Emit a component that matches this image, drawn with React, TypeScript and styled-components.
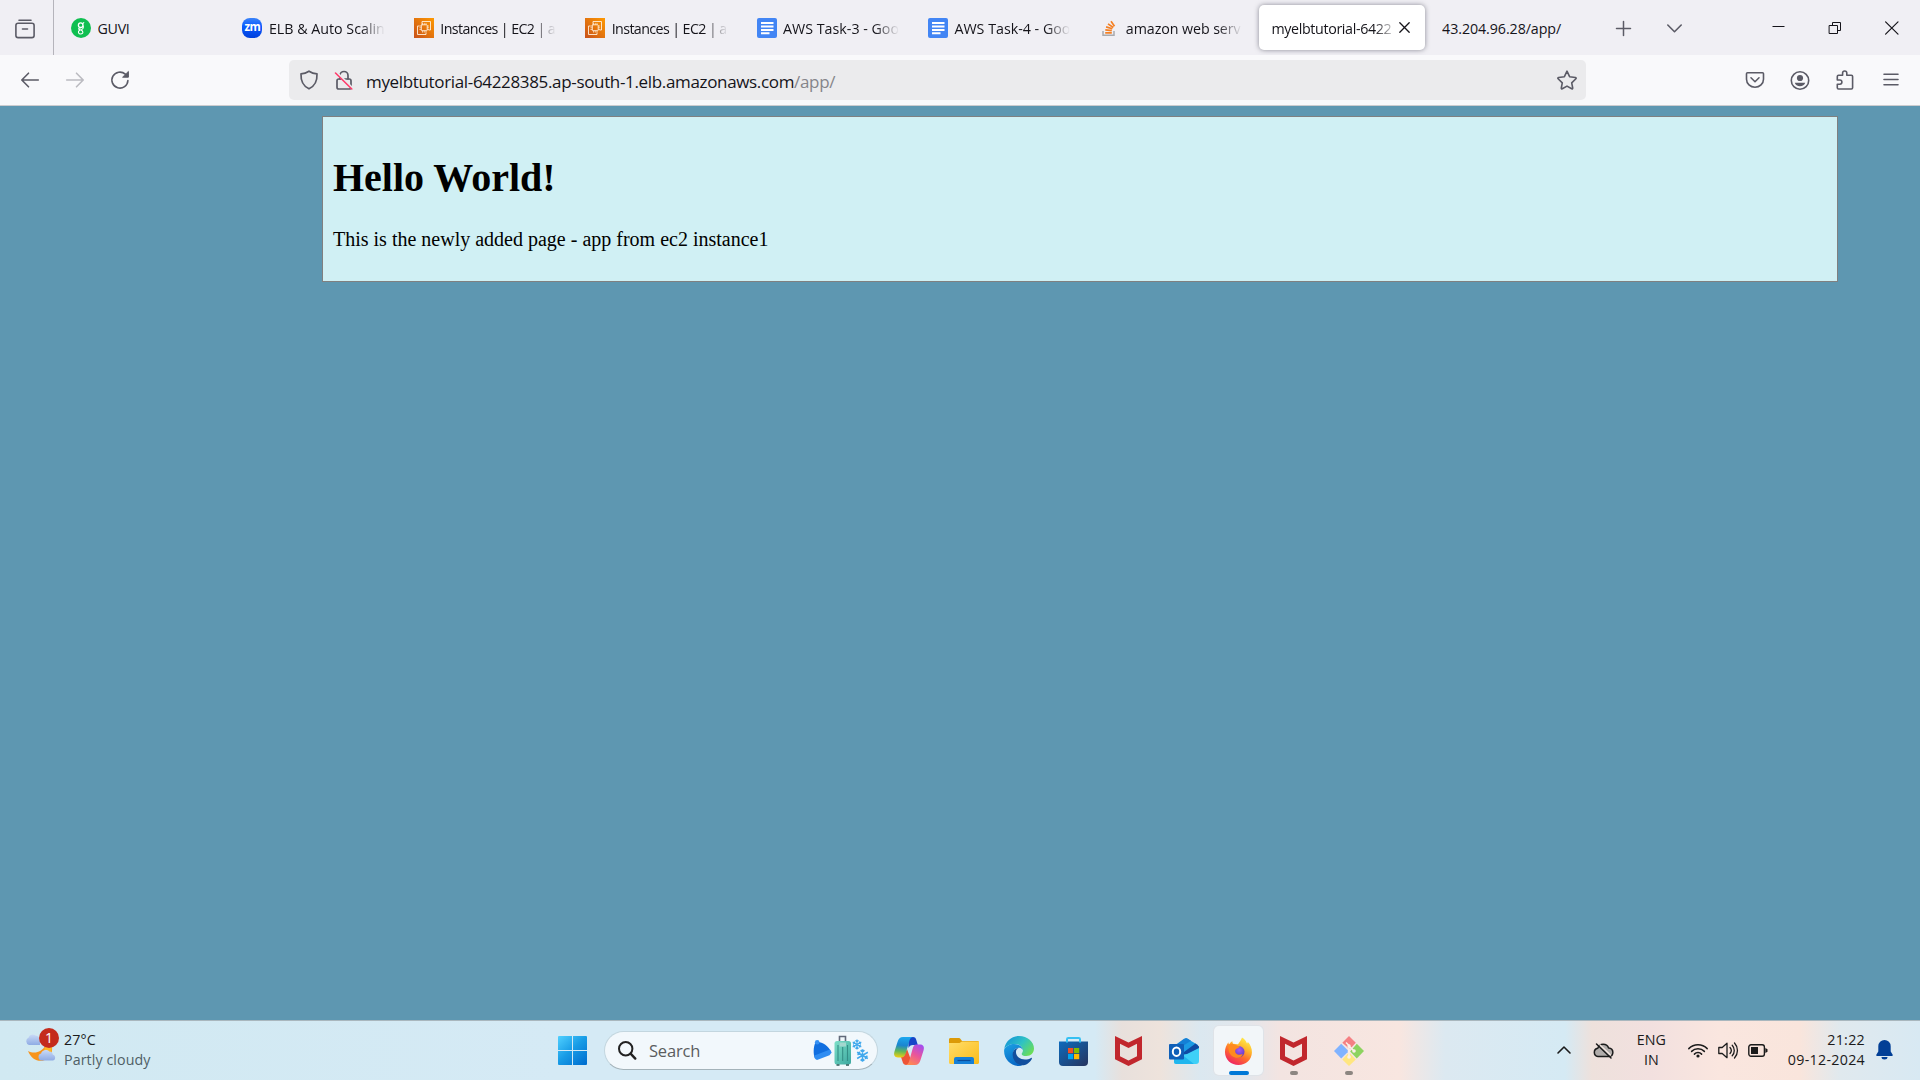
import React from 'react';
import styled, { createGlobalStyle, css } from 'styled-components';

const GlobalStyle = createGlobalStyle`
  * { box-sizing: border-box; }
  html, body { margin: 0; padding: 0; }
  body { width: 1920px; height: 1080px; overflow: hidden; }
  svg { display: block; flex: none; overflow: visible; }
`;

const ui = css`
  font-family: 'Open Sans', 'Noto Sans', sans-serif;
`;

const Screen = styled.div`
  display: flex;
  flex-direction: column;
  width: 1920px;
  height: 1080px;
  overflow: hidden;
`;

/* ---------- Tab strip ---------- */

const TabStrip = styled.header`
  ${ui}
  display: flex;
  height: 55px;
  flex: none;
  background: #f0eff4;
  color: #15141a;
`;

const FirefoxView = styled.div`
  display: flex;
  align-items: center;
  width: 54px;
  padding: 3px 0 0 15px;
  border-right: 1px solid #b5b4bb;
`;

const TabList = styled.div`
  display: flex;
  align-items: center;
  padding: 0 0 0 3px;
`;

const Tab = styled.div<{ $active?: boolean }>`
  display: flex;
  align-items: center;
  gap: ${p => (p.$active ? 7 : 6.5)}px;
  width: ${p => (p.$active ? 166 : 171.4)}px;
  height: 45px;
  padding: 0 ${p => (p.$active ? '15px 0 12px' : '15px 0 14px')};
  margin: ${p => (p.$active ? '0 2.7px' : '0')};
  border-radius: 5px;
  ${p => p.$active && css`
    background: #fff;
    box-shadow: 0 0 5px rgba(70, 70, 85, 0.6);
  `}
`;

const TabLabel = styled.span<{ $tracking?: number; $fade?: boolean }>`
  flex: 1;
  min-width: 0;
  overflow: hidden;
  white-space: nowrap;
  font-size: 14.25px;
  line-height: 24px;
  padding-top: 2px;
  letter-spacing: ${p => p.$tracking ?? 0}px;
  ${p => p.$fade && css`
    mask-image: linear-gradient(to left, transparent, #000 24px);
  `}
`;

const CloseSlot = styled.span`
  display: flex;
  margin-left: -6px;
`;

const StripActions = styled.div`
  display: flex;
  align-items: center;
  gap: 36px;
  padding: 2px 0 0 16px;
`;

const WindowControls = styled.div`
  display: flex;
  align-items: center;
  gap: 43px;
  margin-left: auto;
  padding-right: 21px;
`;

/* ---------- Navigation bar ---------- */

const NavBar = styled.nav`
  ${ui}
  display: flex;
  align-items: center;
  height: 51px;
  flex: none;
  background: #f9f9fb;
  border-bottom: 1px solid #cccccf;
`;

const NavButtons = styled.div`
  display: flex;
  align-items: center;
  gap: 25px;
  width: 289px;
  padding-left: 20px;
`;

const UrlBar = styled.div`
  display: flex;
  align-items: center;
  width: 1297px;
  height: 40px;
  padding: 0 9px 0 10px;
  border-radius: 5px;
  background: #ebebed;
`;

const UrlIcons = styled.div`
  display: flex;
  gap: 15px;
  margin-right: 12px;
`;

const Url = styled.span`
  flex: 1;
  padding-top: 3px;
  font-size: 17px;
  line-height: 26px;
  letter-spacing: -0.34px;
  color: #15141a;
  white-space: nowrap;
`;

const UrlPath = styled.span`
  color: #85858a;
`;

const NavTools = styled.div`
  display: flex;
  align-items: center;
  gap: 25.3px;
  margin-left: auto;
  padding-right: 19.5px;
`;

/* ---------- Web page ---------- */

const Page = styled.main`
  flex: 1;
  padding: 10px 82px 0 322px;
  background: #5e97b1;
  color: #000;
  font-family: 'Liberation Serif', 'Times New Roman', serif;
`;

const Card = styled.section`
  height: 166px;
  padding: 10px;
  border: 1px solid #808080;
  background: #d0f0f4;
`;

const Heading = styled.h1`
  margin: 28px 0 27px;
  font-size: 40px;
  line-height: 46px;
  font-weight: bold;
`;

const Paragraph = styled.p`
  margin: 0;
  font-size: 20px;
  line-height: 23px;
`;

/* ---------- Taskbar ---------- */

const Taskbar = styled.footer`
  ${ui}
  display: flex;
  height: 60px;
  flex: none;
  border-top: 1px solid #a9b7be;
  color: #1b1b1b;
  background: linear-gradient(
    90deg,
    #d1e9f2 0, #d5eaf5 560px, #d5eaf5 1095px, #e8e0dc 1122px, #eee3dc 1160px,
    #dbe8f0 1200px, #e4e6eb 1250px, #f3e4e1 1280px, #f8e6e0 1400px,
    #dce9f1 1445px, #d5eaf4 1565px, #eee1dc 1592px, #f2e0df 1650px,
    #fae6df 1720px, #f9e5dc 1800px, #e0e9ee 1840px, #d8e9f3 1920px
  );
`;

const Weather = styled.div`
  display: flex;
  width: 558px;
  padding: 7px 0 0 25px;
  gap: 8px;
`;

const WeatherIcon = styled.div`
  position: relative;
  width: 31px;
  height: 38px;
`;

const Badge = styled.span`
  position: absolute;
  left: 14px;
  top: 0;
  width: 20px;
  height: 20px;
  border-radius: 50%;
  background: #c42b1c;
  color: #fff;
  font-size: 14px;
  line-height: 20px;
  text-align: center;
`;

const TwoLines = styled.div<{ $align?: string; $tracking?: number }>`
  font-size: 14.25px;
  line-height: 20px;
  text-align: ${p => p.$align ?? 'left'};
  letter-spacing: ${p => p.$tracking ?? 0}px;
  white-space: nowrap;
`;

const WeatherText = styled(TwoLines)`
  padding-top: 2px;
`;

const Muted = styled.div`
  color: #4f5f66;
`;

const Launcher = styled.div`
  display: flex;
  align-items: center;
`;

const SearchPill = styled.div`
  display: flex;
  align-items: center;
  width: 274px;
  height: 39px;
  margin: 0 3px 0 17px;
  padding: 0 8px 0 13px;
  border: 1px solid #c3d6df;
  border-bottom-color: #a4b3ba;
  border-radius: 20px;
  background: #f2f8fc;
`;

const SearchLabel = styled.span`
  flex: 1;
  padding-left: 13px;
  font-size: 16.5px;
  letter-spacing: -0.2px;
  line-height: 24px;
  color: #5b5d5f;
`;

const AppSlot = styled.div<{ $active?: boolean }>`
  display: flex;
  position: relative;
  align-items: center;
  justify-content: center;
  width: 49px;
  height: 49px;
  margin: 0 3px;
  border-radius: 5px;
  ${p => p.$active && css`
    background: #f2f6f9;
    box-shadow: 0 0 0 1px #dfe3e8;
  `}
`;

const RunMark = styled.i<{ $wide?: boolean }>`
  position: absolute;
  bottom: 0;
  left: 50%;
  width: ${p => (p.$wide ? 20 : 8)}px;
  height: 4px;
  border-radius: 2px;
  transform: translateX(-50%);
  background: ${p => (p.$wide ? '#0078d7' : '#8c8681')};
`;

const Tray = styled.div`
  display: flex;
  align-items: center;
  margin-left: auto;
  padding: 0 27px 1px 0;
`;

const TraySlot = styled.div<{ $gap: number }>`
  display: flex;
  margin-left: ${p => p.$gap}px;
`;

const TrayText = styled(TraySlot)`
  padding-bottom: 1px;
`;

/* ---------- Icons ---------- */

type IconProps = { w: number; h: number; box?: string; stroke?: string; sw?: number; children: React.ReactNode };

const Icon = ({ w, h, box, stroke = '#5b5b66', sw = 1.6, children }: IconProps) => (
  <svg width={w} height={h} viewBox={box ?? `0 0 ${w} ${h}`} fill="none" stroke={stroke} strokeWidth={sw} strokeLinecap="round" strokeLinejoin="round">
    {children}
  </svg>
);

const GuviIcon = () => (
  <Icon w={20} h={20} stroke="#fff" sw={1.3}>
    <circle cx="10" cy="10" r="10" fill="#0fbf50" stroke="none" />
    <circle cx="9.7" cy="7.2" r="2.300" />
    <path d="M12 5.300l.8-.7M9.800 9.800c-3 .3-2.700 1.600-.6 2 3.500.6 3.400 4.200.6 4.200-2.600 0-3.200-2.600-1.200-3.800M12.200 8c.5 2-.4 3.300-2.200 4" strokeWidth="1.100" />
  </Icon>
);

const ZoomBadge = styled.span`
  display: flex;
  justify-content: center;
  flex: none;
  width: 20px;
  height: 20px;
  border-radius: 8px;
  background: linear-gradient(#3b83f8, #0b5cff 40%, #0040dc);
  color: #fff;
  font: bold 11.5px/17px 'Open Sans', sans-serif;
  letter-spacing: -0.5px;
`;

const Ec2Icon = ({ id }: { id: string }) => (
  <Icon w={20} h={20} stroke="#ffeeda" sw={0.9}>
    <defs>
      <linearGradient id={id} x1="0" y1="1" x2="1" y2="0">
        <stop offset="0" stopColor="#c8511b" />
        <stop offset="1" stopColor="#ff9900" />
      </linearGradient>
    </defs>
    <path d="M0 0h20v20H0z" fill={`url(#${id})`} stroke="none" />
    <path d="M8 5.500V3.500h8.500V12H15M12 15v1.500H3.500V8H5" />
    <rect x="7.300" y="6.800" width="5.900" height="5.900" rx=".6" />
    <path d="M8.500 6.500V5.300M10.250 6.500V5.300M12 6.500V5.300M8.500 14.200V13M10.250 14.200V13M12 14.200V13M7 8H5.800M7 9.750H5.800M7 11.500H5.800M14.700 8h-1.200M14.700 9.750h-1.200M14.700 11.500h-1.200" strokeWidth=".7" />
  </Icon>
);

const DocsIcon = () => (
  <Icon w={20} h={20} stroke="#fff" sw={2}>
    <rect width="20" height="20" rx="2" fill="#4285f4" stroke="none" />
    <path d="M4 5h12.500M4 8.500h12.500M4 12h12.500M4 15.300h8.500" strokeLinecap="butt" />
  </Icon>
);

const StackIcon = () => (
  <Icon w={20} h={20} stroke="#f48024" sw={1.700}>
    <path d="M4 13v4.200h11V13" stroke="#a9aaad" strokeLinecap="butt" strokeLinejoin="miter" strokeWidth="1.500" />
    <path d="M6.200 14.800h6.600M6.300 11.900l6.500.8M7.100 8.900l6.200 1.900M9 5.900l5.300 3.600M12 3.300l3.500 4.900" strokeLinecap="butt" />
  </Icon>
);

const ShieldIcon = () => (
  <Icon w={20} h={20} sw={1.7}>
    <path d="M10 1.200c2.400 1.600 5 2.500 8 2.700.3 6.500-1.600 12-8 14.900C3.600 15.900 1.700 10.400 2 3.900c3-.2 5.600-1.100 8-2.700z" />
  </Icon>
);

const LockIcon = () => (
  <Icon w={20} h={20} sw={1.700}>
    <rect x="3" y="9" width="14" height="10" rx="1.800" />
    <path d="M6 9V5.500a4 4 0 0 1 8 0V9" />
    <path d="M2.500 2.300l16 16" stroke="#ebebed" strokeWidth="2.500" />
    <path d="M1.500 3l16.300 16" stroke="#ff3b6b" strokeWidth="1.600" />
  </Icon>
);

const FirefoxIcon = () => (
  <svg width="29" height="30" viewBox="0 0 30 30">
    <defs>
      <linearGradient id="ffBody" x1=".8" y1="0" x2=".25" y2="1">
        <stop offset="0" stopColor="#fff44f" />
        <stop offset=".35" stopColor="#ffb62c" />
        <stop offset=".62" stopColor="#ff6b2d" />
        <stop offset="1" stopColor="#ed1d68" />
      </linearGradient>
      <radialGradient id="ffGlobe" cx=".55" cy=".35" r=".7">
        <stop offset="0" stopColor="#a85af5" />
        <stop offset="1" stopColor="#5036b8" />
      </radialGradient>
    </defs>
    <path d="M18.600 1c3 1.600 4.200 3.800 5.200 6.300.7-.2.800-1 .7-1.800 2.900 3 4.500 7 4.400 11C28.700 24 22.500 29.500 15 29.500S1 24 1 16c0-3.800 1.500-7 3.500-10 .1 1 .3 1.700.8 2.300.8-1.400 2-2.600 3.400-3.300-.1 1 .1 1.900.7 2.600 1.900.2 3.300.5 5.200.4C15.600 5.800 17.800 4 18.600 1z" fill="url(#ffBody)" />
    <circle cx="15.200" cy="15.800" r="6" fill="url(#ffGlobe)" />
    <path d="M5 8.300c2.600-1.200 5.900-.7 8.400 1 .9.600 1.900.8 3.100.7-.6 1.800-2.900 2-4.100 3.100-1.700 1.400-.7 4.700 2 5.500 2.200.6 3.700-.6 5.100-.3-1.200 3.200-4.800 4.400-8 3.500C6 20.300 3.500 14.500 5 8.300z" fill="#ff8a1e" />
  </svg>
);

const McAfeeIcon = () => (
  <svg width="27" height="30" viewBox="0 0 27 30">
    <path d="M0 0l13.500 6.500L27 0v23.300L13.500 30 0 23.300zM5 7.800v12.500l8.500 4.300 8.500-4.300V7.800l-8.500 4.200z" fill="#c1272d" fillRule="evenodd" />
  </svg>
);

const WindowsIcon = () => (
  <svg width="29" height="29" viewBox="0 0 29 29">
    <defs>
      <linearGradient id="win" gradientUnits="userSpaceOnUse" x1="0" y1="0" x2="26" y2="29">
        <stop offset="0" stopColor="#50d0ff" />
        <stop offset=".5" stopColor="#189ce6" />
        <stop offset="1" stopColor="#006fd0" />
      </linearGradient>
    </defs>
    <path d="M1 0h13v14H0V1a1 1 0 0 1 1-1zM15 0h13a1 1 0 0 1 1 1v13H15zM0 15h14v14H1a1 1 0 0 1-1-1zM15 15h14v13a1 1 0 0 1-1 1H15z" fill="url(#win)" />
  </svg>
);

const SearchArt = () => (
  <svg width="56" height="31" viewBox="0 0 56 31">
    <defs>
      <linearGradient id="case" x1="0" y1="0" x2="1" y2="1">
        <stop offset="0" stopColor="#7de0c8" />
        <stop offset="1" stopColor="#3ba79f" />
      </linearGradient>
    </defs>
    <path d="M2 8.500C3 6 8 6.500 12 9.500c3 2.200 5 4.500 5.800 7L16 19.500 2 23.500C0 19 .5 12 2 8.500z" fill="#116fe0" />
    <path d="M1.500 20.500L17 14.500l1.700 3-2.200 2.800L4 25c-2.200-.8-2.800-3-2.500-4.500z" fill="#2f8df2" />
    <circle cx="4.200" cy="7.300" r="2.300" fill="#3590f3" />
    <path d="M26.500 7V1.500h6V7" fill="none" stroke="#626a7a" strokeWidth="1.600" />
    <rect x="21.500" y="6" width="16.500" height="23.500" rx="2.500" fill="url(#case)" />
    <path d="M25 10v16M29.700 12v14M34.500 10v16" stroke="#348e86" strokeWidth="1.100" />
    <path d="M26.500 7.500h6.500v4h-6.500z" fill="#a3d7cf" />
    <path d="M23.500 29.300h3v1.500h-3zM33 29.300h3v1.500h-3z" fill="#2c5957" />
    <g stroke="#42a9ed" strokeWidth="1.200" fill="none">
      <path d="M44 4.500v10M39.700 7l8.600 5M48.300 7l-8.600 5M42.500 5.300L44 6.800l1.500-1.500M42.500 13.700l1.500-1.500 1.500 1.500M40 9l1.700-.8-.2-1.700M48 10l-1.700.8.2 1.700M46.500 6.500l-.2 1.700 1.700.8M41.500 12.500l.2-1.700L40 10" />
      <path transform="translate(-5.500 8.500) scale(1.250)" d="M44 4.500v10M39.700 7l8.600 5M48.300 7l-8.600 5M42.500 5.300L44 6.800l1.500-1.500M42.500 13.700l1.500-1.500 1.500 1.500M40 9l1.700-.8-.2-1.700M48 10l-1.700.8.2 1.700" />
    </g>
  </svg>
);

const CopilotIcon = () => (
  <svg width="30" height="28" viewBox="0 0 30 28">
    <defs>
      <linearGradient id="cpA" x1=".4" y1="0" x2=".3" y2="1">
        <stop offset="0" stopColor="#1ca7ee" />
        <stop offset=".4" stopColor="#1a85d0" />
        <stop offset=".7" stopColor="#63b857" />
        <stop offset="1" stopColor="#f2cf10" />
      </linearGradient>
      <linearGradient id="cpB" x1=".8" y1="0" x2=".3" y2="1">
        <stop offset="0" stopColor="#a34df0" />
        <stop offset=".5" stopColor="#e9559b" />
        <stop offset="1" stopColor="#ff8a52" />
      </linearGradient>
    </defs>
    <path d="M14 0h5c2 0 2.800 1.200 3.300 3L23.800 8H19c-2.500 0-3.500 1-4.500 3z" fill="#1745c8" />
    <path d="M7 20c2.500 0 3.500-1.500 4.300-4L13 12l4 11-1.500 2.500c-.6 1.200-1.500 2.500-3 2.500-2.500 0-3.500-1.500-4-3.500z" fill="#ee5536" />
    <path d="M9 0h10c-2.200.5-3 1.800-3.700 4l-3.300 11.500C11 19 9.500 20.500 7 20.500H4c-3.500 0-4.500-2.500-3.600-5.700L3.500 5C4.600 1.500 6 0 9 0z" fill="url(#cpA)" />
    <path d="M22.500 7.500H26c3.500 0 4.500 2.500 3.600 5.700L26.500 23c-1.100 3.500-2.500 5-5.500 5H11.500c2.200-.5 3-1.800 3.700-4l3.200-11.500c1-3.500 1.600-5 4.100-5z" fill="url(#cpB)" />
  </svg>
);

const FolderIcon = () => (
  <svg width="30" height="26" viewBox="0 0 30 26">
    <defs>
      <linearGradient id="fold" x1="0" y1="0" x2="1" y2="1">
        <stop offset="0" stopColor="#ffdd6b" />
        <stop offset="1" stopColor="#fbbc18" />
      </linearGradient>
    </defs>
    <path d="M0 1.500C0 .6.600 0 1.500 0h8c1 0 1.500.3 2 1L13 3h15.500c1 0 1.500.6 1.500 1.500V9H0z" fill="#dc9a08" />
    <path d="M0 5h10.500L13 3.600h17V24.500c0 .9-.6 1.500-1.500 1.500h-27C.6 26 0 25.400 0 24.500z" fill="url(#fold)" />
    <path d="M5 26v-5a2 2 0 0 1 2-2h16a2 2 0 0 1 2 2v5z" fill="#1580d8" />
    <path d="M8.500 22.500h13" stroke="#0a4c9a" strokeWidth="1.200" />
  </svg>
);

const EdgeIcon = () => (
  <svg width="30" height="30" viewBox="0 0 30 30">
    <defs>
      <linearGradient id="edA" x1="0" y1=".2" x2="1" y2=".8">
        <stop offset="0" stopColor="#1494d8" />
        <stop offset=".5" stopColor="#2fc2c4" />
        <stop offset="1" stopColor="#70e04e" />
      </linearGradient>
      <linearGradient id="edB" x1=".2" y1="0" x2=".6" y2="1">
        <stop offset="0" stopColor="#1b9de2" />
        <stop offset="1" stopColor="#0766c4" />
      </linearGradient>
    </defs>
    <path d="M.3 13C1.300 5.500 7.500 0 15 0c8.500 0 15 6 15 12.500 0 4.500-3.300 7.500-7.500 7.500-3.500 0-5-1.300-4.800-2.300.3-.8 1.200-1.500 1.200-3.200 0-3.500-3.800-6.500-8.500-6.500C5.500 8 2 10 .3 13z" fill="url(#edA)" />
    <path d="M.2 13.500C2 10 6 8 10 8c5.500 0 8.800 3.300 8.900 6-1-1.700-2.500-2.200-4-2.200-4.500 0-6.400 4.200-5.400 8.200 1.100 4.500 5 8 9.500 8.500-1.300 1-2.700 1.500-4 1.500C6 30-.8 22 .2 13.500z" fill="url(#edB)" />
    <path d="M14.500 11.900c-1.700 1-2.700 2.500-2.500 4.600.3 4 4 7 9 7 2.500 0 4.300-.7 6-1.600.7-.3 1.200.3.800 1C25.500 26.800 22 29.300 18 29.300 12.500 29 9 24 8.700 19.500c-.3-4 1.800-7.500 5.800-7.600z" fill="#124f9e" />
  </svg>
);

const StoreIcon = () => (
  <svg width="29" height="30" viewBox="0 0 29 30">
    <defs>
      <linearGradient id="store" x1="0" y1="0" x2="1" y2="1">
        <stop offset="0" stopColor="#0d6bbd" />
        <stop offset="1" stopColor="#26345e" />
      </linearGradient>
    </defs>
    <path d="M0 5.500h29V26a4 4 0 0 1-4 4H4a4 4 0 0 1-4-4z" fill="url(#store)" />
    <path d="M8 6.500V3.300C8 2.500 8.500 2 9.300 2h10.400c.8 0 1.300.5 1.300 1.300v3.200" fill="none" stroke="#35c0f2" strokeWidth="2" />
    <path d="M9 12h5.200v5.200H9z" fill="#f25022" />
    <path d="M15 12h5.200v5.200H15z" fill="#7fba00" />
    <path d="M9 18h5.200v5.200H9z" fill="#00a4ef" />
    <path d="M15 18h5.200v5.200H15z" fill="#ffb900" />
  </svg>
);

const OutlookIcon = () => (
  <svg width="30" height="26" viewBox="0 0 30 26">
    <path d="M5 9L17 0l12 7v8L8 20z" fill="#1b9be4" />
    <path d="M5 8L15 .8c1-.8 2.500-.8 3.500-.2L22 2.800 9 11z" fill="#1480d6" />
    <path d="M15 14L26.500 5.500 30 8.500v3L15 21z" fill="#0f4ba3" />
    <path d="M5 18l13-2 12-6v13a3 3 0 0 1-3 3H7.500A2.500 2.500 0 0 1 5 23.500z" fill="#3fd0f7" />
    <path d="M5 20l9-2.500L25 26H7.500A2.500 2.500 0 0 1 5 23.500z" fill="#20b6ee" />
    <rect y="6" width="15" height="15.500" rx="1" fill="#0f5fb8" />
    <ellipse cx="7.500" cy="13.700" rx="3.700" ry="4.200" fill="none" stroke="#fff" strokeWidth="2" />
  </svg>
);

const GitIcon = () => (
  <svg width="30" height="30" viewBox="0 0 30 30">
    <path d="M15 0l6.800 6.800-6 6.500L8.300 6.700z" fill="#f58083" />
    <path d="M7.200 7.800l6.600 6.400-.2 2L7.200 22.600 0 15z" fill="#80b3ff" />
    <path d="M22.800 7.800L30 15l-7.200 7.500-6.600-7z" fill="#8dd35f" />
    <path d="M8.300 23.500l6.700-7 6.800 7L15 30z" fill="#ffe680" />
    <path d="M12 6.500l3 3V21M15.500 10.500l4.500 4.500" stroke="#fbefe9" strokeWidth="1.500" fill="none" />
    <circle cx="15" cy="10" r="1.700" fill="#fbefe9" />
    <circle cx="20" cy="15" r="1.800" fill="#fbefe9" />
    <circle cx="15" cy="21" r="1.800" fill="#fbefe9" />
  </svg>
);

const WeatherArt = () => (
  <svg width="31" height="38" viewBox="0 0 31 38">
    <defs>
      <linearGradient id="cloud" x1="0" y1="0" x2="0" y2="1">
        <stop offset="0" stopColor="#c9daf7" />
        <stop offset="1" stopColor="#8fabe4" />
      </linearGradient>
    </defs>
    <path d="M4 17a4 4 0 0 1-.3-7.500C4.500 6.500 8 5.500 10.500 7.500c3 .3 4.500 2.500 4.500 5V17z" fill="url(#cloud)" />
    <path d="M26 16c2 4 1.500 9.500-2.500 13.500-6 6-16.500 4-20.500-6.500 7 3.500 14 .5 17-5z" fill="#f7941d" />
    <path d="M20 19c3-1 6-1 7 0l-1 7-8 2z" fill="#fdb827" />
    <path d="M16.500 32.500a3.600 3.600 0 0 1-.4-7c.6-3.300 5.500-5 8.200-2 2.500.2 3.400 1.700 3.400 3 3.300.6 3.300 6 0 6z" fill="url(#cloud)" />
  </svg>
);

/* ---------- Screen ---------- */

export default function App() {
  return (
    <Screen>
      <GlobalStyle />

      <TabStrip>
        <FirefoxView>
          <Icon w={20} h={20}>
            <path d="M4 1.200h12" />
            <rect x=".9" y="4.200" width="18.200" height="14.400" rx="2.200" />
            <path d="M7.500 10h5" />
          </Icon>
        </FirefoxView>
        <TabList>
          <Tab><GuviIcon /><TabLabel $tracking={-0.3}>GUVI</TabLabel></Tab>
          <Tab><ZoomBadge>zm</ZoomBadge><TabLabel $fade>ELB &amp; Auto Scalin</TabLabel></Tab>
          <Tab><Ec2Icon id="ec2a" /><TabLabel $fade $tracking={-0.6}>Instances | EC2 | a</TabLabel></Tab>
          <Tab><Ec2Icon id="ec2b" /><TabLabel $fade $tracking={-0.6}>Instances | EC2 | a</TabLabel></Tab>
          <Tab><DocsIcon /><TabLabel $fade>AWS Task-3 - Goo</TabLabel></Tab>
          <Tab><DocsIcon /><TabLabel $fade>AWS Task-4 - Goo</TabLabel></Tab>
          <Tab><StackIcon /><TabLabel $fade $tracking={-0.08}>amazon web serv</TabLabel></Tab>
          <Tab $active>
            <TabLabel $fade $tracking={-0.35}>myelbtutorial-6422</TabLabel>
            <CloseSlot>
              <Icon w={11} h={11} stroke="#15141a" sw={1.3}><path d="M.8.8l9.400 9.400M10.200.8L.8 10.200" /></Icon>
            </CloseSlot>
          </Tab>
          <Tab><TabLabel $tracking={-0.08}>43.204.96.28/app/</TabLabel></Tab>
        </TabList>
        <StripActions>
          <Icon w={15} h={15} sw={1.5}><path d="M7.500.5v14M.5 7.500h14" /></Icon>
          <Icon w={15} h={10} sw={1.600}><path d="M.8 1l6.700 6.700L14.200 1" /></Icon>
        </StripActions>
        <WindowControls>
          <Icon w={12} h={12} stroke="#15141a" sw={1}><path d="M-.5 4.500h12" strokeLinecap="butt" /></Icon>
          <Icon w={14} h={14} stroke="#15141a" sw={1}>
            <path d="M1.500 4.500h8v8h-8zM4.500 4.500v-3h8v8h-3" strokeLinejoin="miter" />
          </Icon>
          <Icon w={14} h={14} stroke="#15141a" sw={1.200}><path d="M.6.800l12.400 12.400M13 .8L.6 13.200" /></Icon>
        </WindowControls>
      </TabStrip>

      <NavBar>
        <NavButtons>
          <Icon w={20} h={20}><path d="M18.300 10H2M8.500 3.200L1.800 10l6.700 6.800" /></Icon>
          <Icon w={20} h={20} stroke="#bbbbc1"><path d="M1.700 10H18M11.500 3.200l6.700 6.800-6.700 6.800" /></Icon>
          <Icon w={20} h={20}>
            <path d="M17.900 10.500a8 8 0 1 1-2.600-6.300" />
            <path d="M18.400 1.800v5.400H13z" fill="#5b5b66" stroke="#5b5b66" strokeWidth="1" />
          </Icon>
        </NavButtons>
        <UrlBar>
          <UrlIcons><ShieldIcon /><LockIcon /></UrlIcons>
          <Url>myelbtutorial-64228385.ap-south-1.elb.amazonaws.com<UrlPath>/app/</UrlPath></Url>
          <Icon w={20} h={20}>
            <path d="M10 1.200l2.600 5.500 5.800.8c.7.100 1 .8.500 1.300l-4.200 4.100 1 5.100c.1.700-.4 1-1 .8L10 16.100l-4.700 2.700c-.6.200-1.100-.1-1-.8l1-5.100-4.200-4.100c-.5-.5-.2-1.200.5-1.300l5.800-.8z" />
          </Icon>
        </UrlBar>
        <NavTools>
          <Icon w={20} h={20}>
            <path d="M2.500 2.700h15c.6 0 1 .4 1 1V9.300a8.500 8 0 0 1-17 0V3.700c0-.6.400-1 1-1zM6 7.800l4 3.900 4-3.900" />
          </Icon>
          <Icon w={20} h={20}>
            <circle cx="10" cy="10.500" r="8.700" />
            <circle cx="10" cy="8" r="3.100" fill="#5b5b66" stroke="none" />
            <path d="M4.800 12.700h10.400c-.6 2.200-2.600 3.600-5.200 3.600s-4.600-1.400-5.200-3.600z" fill="#5b5b66" stroke="none" />
          </Icon>
          <Icon w={20} h={20}>
            <path d="M7.600 5.300V3.100a2 2 0 0 1 4.200 0v2.200h4.600c.7 0 1.200.5 1.200 1.200v11.300c0 .7-.5 1.200-1.200 1.200H3.500c-.7 0-1.200-.5-1.200-1.200v-3.600h2.500a2 2 0 0 0 0-4.200H2.300V6.500c0-.7.500-1.200 1.200-1.200z" />
          </Icon>
          <Icon w={20} h={20}><path d="M3 4.300h14M3 9.500h14M3 14.800h14" /></Icon>
        </NavTools>
      </NavBar>

      <Page>
        <Card>
          <Heading>Hello World!</Heading>
          <Paragraph>This is the newly added page - app from ec2 instance1</Paragraph>
        </Card>
      </Page>

      <Taskbar>
        <Weather>
          <WeatherIcon><WeatherArt /><Badge>1</Badge></WeatherIcon>
          <WeatherText $tracking={0.08}>
            <div>27°C</div>
            <Muted>Partly cloudy</Muted>
          </WeatherText>
        </Weather>
        <Launcher>
          <WindowsIcon />
          <SearchPill>
            <Icon w={18} h={19} stroke="#222" sw={2}>
              <circle cx="7.700" cy="7.700" r="6.700" />
              <path d="M12.600 12.600l4.700 5" strokeWidth="2.400" />
            </Icon>
            <SearchLabel>Search</SearchLabel>
            <SearchArt />
          </SearchPill>
          <AppSlot><CopilotIcon /></AppSlot>
          <AppSlot><FolderIcon /></AppSlot>
          <AppSlot><EdgeIcon /></AppSlot>
          <AppSlot><StoreIcon /></AppSlot>
          <AppSlot><McAfeeIcon /></AppSlot>
          <AppSlot><OutlookIcon /></AppSlot>
          <AppSlot $active><FirefoxIcon /><RunMark $wide /></AppSlot>
          <AppSlot><McAfeeIcon /><RunMark /></AppSlot>
          <AppSlot><GitIcon /><RunMark /></AppSlot>
        </Launcher>
        <Tray>
          <TraySlot $gap={0}>
            <Icon w={14} h={8} stroke="#1b1b1b" sw={1.600}><path d="M1 7l6-6 6 6" /></Icon>
          </TraySlot>
          <TraySlot $gap={22}>
            <Icon w={21} h={17} stroke="#1b1b1b" sw={1.500}>
              <path d="M5 14.500a4.200 4.200 0 0 1-.2-8.300C6.500 1.100 13.500.8 15.600 5.900c5.600.4 5.700 8.400.2 8.600z" fill="#b1adab" />
              <path d="M7 3l10.500 10" stroke="#f3e6e0" strokeWidth="1.500" />
              <path d="M3.500 2l14.500 14" />
            </Icon>
          </TraySlot>
          <TrayText $gap={23}>
            <TwoLines $align="center"><div>ENG</div><div>IN</div></TwoLines>
          </TrayText>
          <TraySlot $gap={22}>
            <Icon w={20} h={15} stroke="#1b1b1b" sw={1.500}>
              <path d="M.8 5.600a13 13 0 0 1 18.400 0M3.600 8.400a9 9 0 0 1 12.800 0M6.400 11.100a5.100 5.100 0 0 1 7.200 0" />
              <circle cx="10" cy="13" r="1.600" fill="#1b1b1b" stroke="none" />
            </Icon>
          </TraySlot>
          <TraySlot $gap={10}>
            <Icon w={20} h={17} stroke="#1b1b1b" sw={1.300}>
              <path d="M.8 5.500h3.400L9 1.300v14.400l-4.800-4.200H.8zM12 5.500a4.500 4.500 0 0 1 0 6M14.200 3.200a7.800 7.800 0 0 1 0 10.600M16.500 1a11 11 0 0 1 0 15" />
            </Icon>
          </TraySlot>
          <TraySlot $gap={10}>
            <Icon w={21} h={13} stroke="#1b1b1b" sw={1.400}>
              <rect x=".8" y=".8" width="15.600" height="11.400" rx="2.200" />
              <path d="M3 3h7v7H3z" fill="#1b1b1b" stroke="none" />
              <path d="M17.300 4l2.200 1.300v2.400L17.300 9z" fill="#1b1b1b" stroke="none" />
            </Icon>
          </TraySlot>
          <TrayText $gap={19}>
            <TwoLines $align="right" $tracking={0.28}><div>21:22</div><div>09-12-2024</div></TwoLines>
          </TrayText>
          <TraySlot $gap={11}>
            <svg width="17" height="20" viewBox="0 0 17 20">
              <path d="M8.500 0a6.200 6.200 0 0 1 6.200 6.200v5.300l2 3.300c.3.600 0 1.200-.7 1.200H1c-.7 0-1-.6-.7-1.200l2-3.300V6.200A6.200 6.200 0 0 1 8.500 0zM5.500 17h6a3 2.500 0 0 1-6 0z" fill="#023f96" />
            </svg>
          </TraySlot>
        </Tray>
      </Taskbar>
    </Screen>
  );
}
